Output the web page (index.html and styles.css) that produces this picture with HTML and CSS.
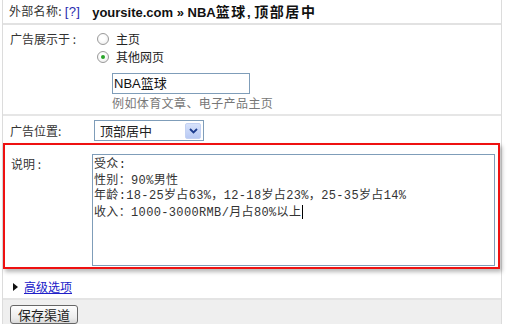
FILE: index.html
```html
<!DOCTYPE html>
<html>
<head>
<meta charset="utf-8">
<link rel="stylesheet" href="styles.css">
</head>
<body>
<div class="panel">
  <div class="row head">
    <span class="muted">外部名称: <a class="help">[?]</a></span>
    <b class="crumb">yoursite.com » NBA<span class="cj">篮球</span>, <span class="cj">顶部居中</span></b>
  </div>
  <div class="row show">
    <div class="label">广告展示于 :</div>
    <div class="field">
      <div class="opt"><span class="radio"></span>主页</div>
      <div class="opt"><span class="radio on"></span>其他网页</div>
      <div class="sub">
        <div class="input">NBA篮球</div>
        <div class="hint">例如体育文章、电子产品主页</div>
      </div>
    </div>
  </div>
  <div class="row pos">
    <div class="label">广告位置:</div>
    <div class="select"><span class="val">顶部居中</span><span class="btn"><svg width="9" height="6" viewBox="0 0 9 6"><path d="M1 1 L4.5 4.5 L8 1" fill="none" stroke="#1d3d8f" stroke-width="1.8"/></svg></span></div>
  </div>
  <div class="row desc">
    <div class="label">说明 :</div>
    <div class="textarea">
      <div class="ln">受众:</div>
      <div class="ln">性别：90%男性</div>
      <div class="ln">年龄:18-25岁占63%，12-18岁占23%，25-35岁占14%</div>
      <div class="ln">收入：1000-3000RMB/月占80%以上<span class="caret"></span></div>
    </div>
  </div>
  <div class="row adv">
    <span class="tri"></span><a class="link">高级选项</a>
  </div>
  <div class="row foot">
    <span class="button">保存渠道</span>
  </div>
</div>
</body>
</html>
```
FILE: styles.css
```css
* { box-sizing: border-box; }
html, body { margin: 0; padding: 0; background: #fff; }
body {
  width: 512px;
  height: 325px;
  overflow: hidden;
  font-family: "Noto Sans CJK SC", "Noto Sans", sans-serif;
  font-size: 12px;
  color: #222;
}
.panel {
  margin-left: 2px;
  width: 500px;
  border-left: 1px solid #dcdcdc;
  border-right: 1px solid #dcdcdc;
}
.row { display: flex; }
.head {
  height: 25px;
  align-items: center;
  padding-left: 6px;
  border-bottom: 2px solid #e2e2e2;
  font-size: 12px;
  line-height: 16px;
}
.muted { color: #333; letter-spacing: 0.3px; }
.help { color: #2b2bb0; font-family: "Liberation Sans", sans-serif; font-size: 13px; }
.crumb { margin-left: 12px; color: #111; font-family: "Liberation Sans", "Noto Sans CJK SC", sans-serif; font-weight: bold; font-size: 13px; }
.cj { font-family: "Noto Sans CJK SC", sans-serif; font-size: 14px; letter-spacing: 1.6px; }
.label {
  width: 90px;
  flex: none;
  padding-left: 7px;
  color: #333;
  font-size: 12px;
}
.show {
  padding-top: 5px;
  height: 91px;
  border-bottom: 2px solid #e6e6e6;
}
.show .label { line-height: 18px; }
.field { padding-left: 4px; }
.opt { display: flex; align-items: center; height: 18px; line-height: 16px; }
.radio {
  width: 12px; height: 12px;
  border-radius: 50%;
  border: 1px solid #9a9a9a;
  background: radial-gradient(circle at 45% 40%, #fff 30%, #e6e6e6 100%);
  margin-right: 7px;
  position: relative;
}
.radio.on::after {
  content: "";
  position: absolute;
  left: 3px; top: 3px;
  width: 4px; height: 4px;
  border-radius: 50%;
  background: #2aa52a;
}
.sub { padding-left: 15px; padding-top: 7px; }
.input {
  width: 138px; height: 21px;
  border: 1px solid #7f9db9;
  padding-left: 1px;
  line-height: 19px;
  font-size: 13px;
  color: #111;
  font-family: "Liberation Sans", "Noto Sans CJK SC", sans-serif;
}
.hint { color: #777; line-height: 16px; margin-top: 1px; letter-spacing: 0.4px; }
.pos { height: 27px; align-items: center; padding-top: 2px; }
.select {
  margin-left: 1px;
  width: 110px; height: 21px;
  border: 1px solid #7f9db9;
  display: flex; align-items: center;
  justify-content: space-between;
  padding: 0 2px 0 5px;
  font-size: 13px;
}
.btn {
  width: 16px; height: 16px;
  background: linear-gradient(#d7e2fb, #b8c9f4);
  border: 1px solid #c3d1f3;
  border-radius: 2px;
  display: flex; align-items: center; justify-content: center;
}
.desc {
  height: 126px;
  margin-right: 1px;
  border: 2px solid #ee1111;
  box-shadow: 2px 3px 4px rgba(0,0,0,0.28);
  padding-top: 9px;
}
.desc .label { width: 87px; padding-left: 6px; line-height: 16px; padding-top: 2px; }
.textarea {
  width: 403px; height: 112px;
  border: 1px solid #7f9db9;
  padding: 3px 0 0 1px;
  font-family: "Liberation Mono", "Noto Sans CJK SC", monospace;
  font-size: 12px;
  color: #333;
  letter-spacing: 0.35px;
}
.ln { height: 15.7px; line-height: 15.7px; white-space: nowrap; }
.caret { display: inline-block; width: 1px; height: 14px; background: #000; vertical-align: -3px; margin-left: 1px; }
.adv { height: 29px; align-items: center; padding-left: 10px; padding-top: 6px; }
.tri {
  width: 0; height: 0;
  border-top: 4px solid transparent;
  border-bottom: 4px solid transparent;
  border-left: 5px solid #111;
  margin-right: 6px;
}
.link { color: #2020c8; text-decoration: underline; font-size: 12px; }
.foot {
  border-top: 2px solid #e4e4e4;
  background: #efefef;
  height: 26px;
  padding-left: 7px;
  padding-top: 5px;
}
.button {
  width: 68px; height: 19px;
  border: 1px solid #666;
  border-radius: 3px;
  background: linear-gradient(#fdfdfd, #ececec 70%, #d8d8d8);
  text-align: center;
  line-height: 17px;
  font-size: 13px;
  color: #222;
}
```
